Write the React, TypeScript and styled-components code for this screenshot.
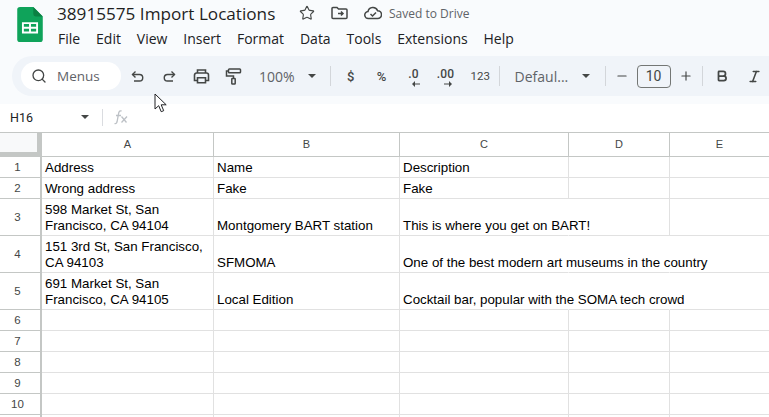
import React from "react";
import styled, { createGlobalStyle } from "styled-components";
import { Star, Search, Minus, Plus, Bold, Italic } from "lucide-react";

const GlobalStyle = createGlobalStyle`
    html, body {
        margin: 0;
        padding: 0;
        background: #ffffff;
        overflow: hidden;
    }
    body {
        font-family: "Roboto", "Liberation Sans", sans-serif;
        color: #202124;
    }
`;

const columns = [
    { label: "A", width: 172 },
    { label: "B", width: 186 },
    { label: "C", width: 169 },
    { label: "D", width: 101 },
    { label: "E", width: 100 },
];

// open: how many cells, from C on, the long text runs across without a border
const rows = [
    { n: "1", h: 21, open: 0, cells: ["Address", "Name", "Description"] },
    { n: "2", h: 21, open: 0, cells: ["Wrong address", "Fake", "Fake"] },
    { n: "3", h: 37, open: 1, cells: ["598 Market St, San\nFrancisco, CA 94104", "Montgomery BART station", "This is where you get on BART!"] },
    { n: "4", h: 37, open: 3, cells: ["151 3rd St, San Francisco,\nCA 94103", "SFMOMA", "One of the best modern art museums in the country"] },
    { n: "5", h: 37, open: 3, cells: ["691 Market St, San\nFrancisco, CA 94105", "Local Edition", "Cocktail bar, popular with the SOMA tech crowd"] },
    { n: "6", h: 21, open: 0, cells: [] },
    { n: "7", h: 21, open: 0, cells: [] },
    { n: "8", h: 21, open: 0, cells: [] },
    { n: "9", h: 21, open: 0, cells: [] },
    { n: "10", h: 21, open: 0, cells: [] },
    { n: "", h: 21, open: 0, cells: [] },
];

const menus = ["File", "Edit", "View", "Insert", "Format", "Data", "Tools", "Extensions", "Help"];

const SheetsLogo = () => (
    <svg width="26" height="35" viewBox="0 0 27 37">
        <path d="M17 0H3a3 3 0 0 0-3 3v31a3 3 0 0 0 3 3h21a3 3 0 0 0 3-3V10z" fill="#0fa35a" />
        <path d="M17 0l10 10H19.500a2.500 2.500 0 0 1-2.500-2.500z" fill="#0b8043" />
        <path d="M5 16h17v12H5z M7 18v3h5.500v-3z M14.500 18v3H20v-3z M7 23v3h5.500v-3z M14.500 23v3H20v-3z" fill="#ffffff" fillRule="evenodd" />
    </svg>
);

const MoveIcon = () => (
    <svg width="17" height="14" viewBox="0 0 17 14" fill="none" stroke="#444746" strokeWidth="1.500">
        <path d="M1 2.500a1 1 0 0 1 1-1h4l1.500 1.500H15a1 1 0 0 1 1 1v7.500a1 1 0 0 1-1 1H2a1 1 0 0 1-1-1z" />
        <path d="M7 7.500h5M10 5.500l2 2-2 2" />
    </svg>
);

const CloudIcon = () => (
    <svg width="18" height="14" viewBox="0 0 18 14" fill="none" stroke="#444746" strokeWidth="1.500">
        <path d="M4.500 12.500a3.500 3.500 0 0 1-.5-7 5 5 0 0 1 9.600-.8 3.900 3.900 0 0 1 0 7.800z" />
        <path d="M6.500 8l2 2 3.500-3.500" />
    </svg>
);

const UndoIcon = () => (
    <svg width="17" height="17" viewBox="0 0 17 17" fill="none" stroke="#444746" strokeWidth="1.400">
        <path d="M6.500 3.500L3.500 6.500l3 3" />
        <path d="M3.500 6.500h7a3.200 3.200 0 0 1 0 6.500H5" />
    </svg>
);

const RedoIcon = () => (
    <svg width="17" height="17" viewBox="0 0 17 17" fill="none" stroke="#444746" strokeWidth="1.400">
        <path d="M10.500 3.500l3 3-3 3" />
        <path d="M13.500 6.500h-7a3.200 3.200 0 0 0 0 6.500H12" />
    </svg>
);

const PrintIcon = () => (
    <svg width="17" height="17" viewBox="0 0 17 17" fill="none" stroke="#444746" strokeWidth="1.600">
        <path d="M4.500 5V2h8v3" />
        <path d="M4.500 12.500H1.500V7a2 2 0 0 1 2-2h10a2 2 0 0 1 2 2v5.500h-3" />
        <path d="M4.500 9.800h8v5h-8z" />
    </svg>
);

const RollerIcon = () => (
    <svg width="17" height="17" viewBox="0 0 17 17" fill="none" stroke="#444746" strokeWidth="1.500">
        <rect x="3.500" y="1" width="12" height="3.800" rx="0.800" />
        <path d="M3.500 3H1.500v5h7v2.500" />
        <rect x="6.800" y="10.500" width="3.400" height="5.500" rx="0.600" />
    </svg>
);

const Arrow = ({ right }: { right?: boolean }) => (
    <svg width="8" height="6" viewBox="0 0 8 6" fill="#444746">
        <path d={right ? "M0 2.400h5V0l3 3-3 3V3.600H0z" : "M8 2.400H3V0L0 3l3 3V3.600h5z"} />
    </svg>
);

const FxIcon = () => (
    <svg width="16" height="16" viewBox="0 0 16 16" fill="none" stroke="#bdc1c6" strokeWidth="1.300">
        <path d="M1.500 14.500c1.500.5 2.200-.2 2.600-2l1.600-8.500c.4-1.800 1.300-2.500 3-2M3 6.500h5" />
        <path d="M8.500 7.500l5 6M14 7.500l-5.500 6" />
    </svg>
);

const Pointer = () => (
    <svg width="14" height="20" viewBox="0 0 14 20">
        <path d="M1 1v15l3.700-3.300 2.500 6 2.500-1-2.500-5.900h5z" fill="#ffffff" stroke="#202124" strokeWidth="1" strokeLinejoin="round" />
    </svg>
);

export default function App() {
    return (
        <Page>
            <GlobalStyle />
            <Header>
                <TitleBar>
                    <LogoSlot><SheetsLogo /></LogoSlot>
                    <TitleBlock>
                        <TitleRow>
                            <DocName>38915575 Import Locations</DocName>
                            <TitleIcons>
                                <Star size={16} strokeWidth={1.700} color="#444746" />
                                <MoveIcon />
                                <CloudIcon />
                            </TitleIcons>
                            <SavedText>Saved to Drive</SavedText>
                        </TitleRow>
                        <MenuRow>
                            {menus.map((m) => <MenuItem key={m}>{m}</MenuItem>)}
                        </MenuRow>
                    </TitleBlock>
                </TitleBar>
                <Toolbar>
                    <SearchPill>
                        <Search size={16} strokeWidth={2} color="#444746" />
                        <span>Menus</span>
                    </SearchPill>
                    <ToolGroup>
                        <ToolIcon><UndoIcon /></ToolIcon>
                        <ToolIcon><RedoIcon /></ToolIcon>
                        <ToolIcon><PrintIcon /></ToolIcon>
                        <ToolIcon><RollerIcon /></ToolIcon>
                    </ToolGroup>
                    <ZoomText>100%</ZoomText>
                    <Caret $ml={13} />
                    <Divider $ml={14} />
                    <SymbolText $w={40}>$</SymbolText>
                    <SymbolText $w={22}>%</SymbolText>
                    <DecimalButton $w={42}>
                        <span>.0</span>
                        <Arrow />
                    </DecimalButton>
                    <DecimalButton $w={22}>
                        <span>.00</span>
                        <Arrow right />
                    </DecimalButton>
                    <NumberFormat>123</NumberFormat>
                    <Divider $ml={10} />
                    <FontName>Defaul...</FontName>
                    <Caret $ml={14} />
                    <Divider $ml={15} />
                    <StepButton $ml={9}><Minus size={14} strokeWidth={2} /></StepButton>
                    <SizeBox>10</SizeBox>
                    <StepButton $ml={8}><Plus size={14} strokeWidth={2} /></StepButton>
                    <Divider $ml={9} />
                    <StepButton $ml={12}><Bold size={14} strokeWidth={3} /></StepButton>
                    <StepButton $ml={18}><Italic size={15} strokeWidth={2.500} /></StepButton>
                </Toolbar>
                <CursorSpot><Pointer /></CursorSpot>
            </Header>
            <FormulaBar>
                <CellRef>H16</CellRef>
                <RefCaret />
                <FormulaDivider />
                <FxIcon />
            </FormulaBar>
            <Sheet>
                <HeaderRow>
                    <Corner />
                    {columns.map((c) => (
                        <ColHead key={c.label} $w={c.width}>{c.label}</ColHead>
                    ))}
                </HeaderRow>
                {rows.map((r) => (
                    <Row key={r.n || "last"} $h={r.h}>
                        <RowHead>{r.n}</RowHead>
                        {columns.map((c, i) => (
                            <Cell key={c.label} $w={c.width} $open={i >= 2 && i < 2 + r.open}>{r.cells[i]}</Cell>
                        ))}
                    </Row>
                ))}
            </Sheet>
        </Page>
    );
}

const Page = styled.div`
    width: 769px;
    height: 417px;
    overflow: hidden;
    display: flex;
    flex-direction: column;
`;

const Header = styled.header`
    position: relative;
    height: 104px;
    background: #f9fbfd;
    display: flex;
    flex-direction: column;
    flex-shrink: 0;
`;

const TitleBar = styled.div`
    display: flex;
    height: 56px;
`;

const LogoSlot = styled.div`
    width: 57px;
    padding: 7px 0 0 17px;
    box-sizing: border-box;
`;

const TitleBlock = styled.div`
    display: flex;
    flex-direction: column;
    padding-top: 1px;
`;

const TitleRow = styled.div`
    display: flex;
    align-items: center;
    height: 24px;
`;

const DocName = styled.div`
    font-family: "Open Sans", "Noto Sans", sans-serif;
    font-size: 17.150px;
    color: #1f1f1f;
    width: 242px;
    white-space: nowrap;
`;

const TitleIcons = styled.div`
    display: flex;
    align-items: center;
    gap: 16px;
`;

const SavedText = styled.div`
    font-family: "Open Sans", sans-serif;
    font-size: 12px;
    color: #5f6368;
    margin-left: 7px;
`;

const MenuRow = styled.nav`
    display: flex;
    gap: 15.900px;
    margin-top: 4px;
    margin-left: 1px;
`;

const MenuItem = styled.span`
    font-family: "Open Sans", sans-serif;
    font-size: 14px;
    line-height: 20px;
    color: #202124;
`;

const Toolbar = styled.div`
    display: flex;
    align-items: center;
    height: 40px;
    margin-left: 12px;
    padding-left: 9px;
    background: #f0f4f9;
    border-radius: 20px 0 0 20px;
    color: #444746;
    overflow: hidden;
`;

const SearchPill = styled.div`
    display: flex;
    align-items: center;
    gap: 10px;
    width: 100px;
    height: 28px;
    box-sizing: border-box;
    padding-left: 10px;
    background: #ffffff;
    border-radius: 14px;
    flex-shrink: 0;
    font-family: "Open Sans", sans-serif;
    font-size: 13.500px;
    color: #5f6368;
`;

const ToolGroup = styled.div`
    display: flex;
    align-items: center;
    gap: 15px;
    margin-left: 8px;
`;

const ToolIcon = styled.div`
    width: 17px;
    height: 17px;
    display: flex;
    align-items: center;
    justify-content: center;
    color: #444746;
`;

const ZoomText = styled.span`
    font-family: "Open Sans", sans-serif;
    font-size: 14px;
    color: #5f6368;
    margin-left: 17px;
`;

const Caret = styled.span<{ $ml: number }>`
    width: 0;
    height: 0;
    margin-left: ${(p) => p.$ml}px;
    border-left: 4px solid transparent;
    border-right: 4px solid transparent;
    border-top: 4px solid #444746;
    flex-shrink: 0;
`;

const Divider = styled.span<{ $ml: number }>`
    width: 1px;
    height: 20px;
    margin-left: ${(p) => p.$ml}px;
    background: #d3d6da;
    flex-shrink: 0;
`;

const SymbolText = styled.span<{ $w: number }>`
    width: ${(p) => p.$w}px;
    text-align: center;
    font-size: 13px;
    font-weight: 500;
    color: #444746;
    flex-shrink: 0;
`;

const DecimalButton = styled.span<{ $w: number }>`
    width: ${(p) => p.$w}px;
    display: flex;
    flex-direction: column;
    align-items: center;
    flex-shrink: 0;
    padding-top: 2px;
    font-size: 12px;
    font-weight: 500;
    line-height: 12px;
    color: #444746;
    letter-spacing: 0.200px;
    svg {
        margin: 1px 0 0 5px;
    }
`;

const NumberFormat = styled.span`
    font-size: 11.500px;
    color: #444746;
    margin-left: 14px;
    width: 18px;
    flex-shrink: 0;
    white-space: nowrap;
`;

const FontName = styled.span`
    font-family: "Open Sans", sans-serif;
    font-size: 14px;
    color: #5f6368;
    margin-left: 15px;
    width: 53px;
    white-space: nowrap;
    flex-shrink: 0;
`;

const StepButton = styled.span<{ $ml: number }>`
    display: flex;
    margin-left: ${(p) => p.$ml}px;
    color: #444746;
    flex-shrink: 0;
`;

const SizeBox = styled.span`
    width: 34px;
    height: 23px;
    box-sizing: border-box;
    margin-left: 8px;
    border: 1px solid #747775;
    border-radius: 4px;
    text-align: center;
    font-size: 14px;
    line-height: 21px;
    color: #444746;
    flex-shrink: 0;
`;

const CursorSpot = styled.div`
    position: absolute;
    left: 154px;
    top: 93px;
    z-index: 5;
    height: 20px;
`;

const FormulaBar = styled.div`
    height: 28px;
    box-sizing: border-box;
    padding-bottom: 2px;
    display: flex;
    align-items: center;
    background: #ffffff;
    flex-shrink: 0;
`;

const CellRef = styled.span`
    font-family: "Roboto", sans-serif;
    font-size: 12.500px;
    color: #202124;
    margin-left: 10px;
    width: 71px;
`;

const RefCaret = styled.span`
    width: 0;
    height: 0;
    border-left: 4px solid transparent;
    border-right: 4px solid transparent;
    border-top: 4px solid #444746;
`;

const FormulaDivider = styled.span`
    width: 1px;
    height: 17px;
    margin: 0 10px 0 13px;
    background: #dadce0;
`;

const Sheet = styled.div`
    display: flex;
    flex-direction: column;
    flex: 1;
    overflow: hidden;
    border-top: 1px solid #c4c7c5;
    font-family: "Liberation Sans", Arial, sans-serif;
`;

const HeaderRow = styled.div`
    display: flex;
    height: 24px;
    flex-shrink: 0;
    border-bottom: 1px solid #c4c7c5;
    box-sizing: border-box;
`;

const Corner = styled.div`
    width: 42px;
    box-sizing: border-box;
    flex-shrink: 0;
    background: #f8f9fa;
    border-right: 5px solid #c4c7c5;
    border-bottom: 4px solid #c4c7c5;
`;

const ColHead = styled.div<{ $w: number }>`
    width: ${(p) => p.$w}px;
    flex-shrink: 0;
    box-sizing: border-box;
    border-right: 1px solid #c4c7c5;
    text-align: center;
    font-size: 11px;
    line-height: 22px;
    color: #444746;
`;

const Row = styled.div<{ $h: number }>`
    display: flex;
    height: ${(p) => p.$h}px;
    flex-shrink: 0;
`;

const RowHead = styled.div`
    width: 42px;
    flex-shrink: 0;
    box-sizing: border-box;
    display: flex;
    align-items: center;
    justify-content: center;
    padding-right: 5px;
    border-right: 2px solid #c4c7c5;
    border-bottom: 1px solid #c4c7c5;
    font-size: 11.500px;
    color: #444746;
`;

const Cell = styled.div<{ $w: number; $open: boolean }>`
    width: ${(p) => p.$w}px;
    flex-shrink: 0;
    box-sizing: border-box;
    display: flex;
    align-items: flex-end;
    padding: 0 3px 1px 3px;
    border-right: 1px solid ${(p) => (p.$open ? "transparent" : "#e1e1e1")};
    border-bottom: 1px solid #e1e1e1;
    font-size: 13.330px;
    line-height: 16px;
    white-space: pre;
    color: #000000;
`;
